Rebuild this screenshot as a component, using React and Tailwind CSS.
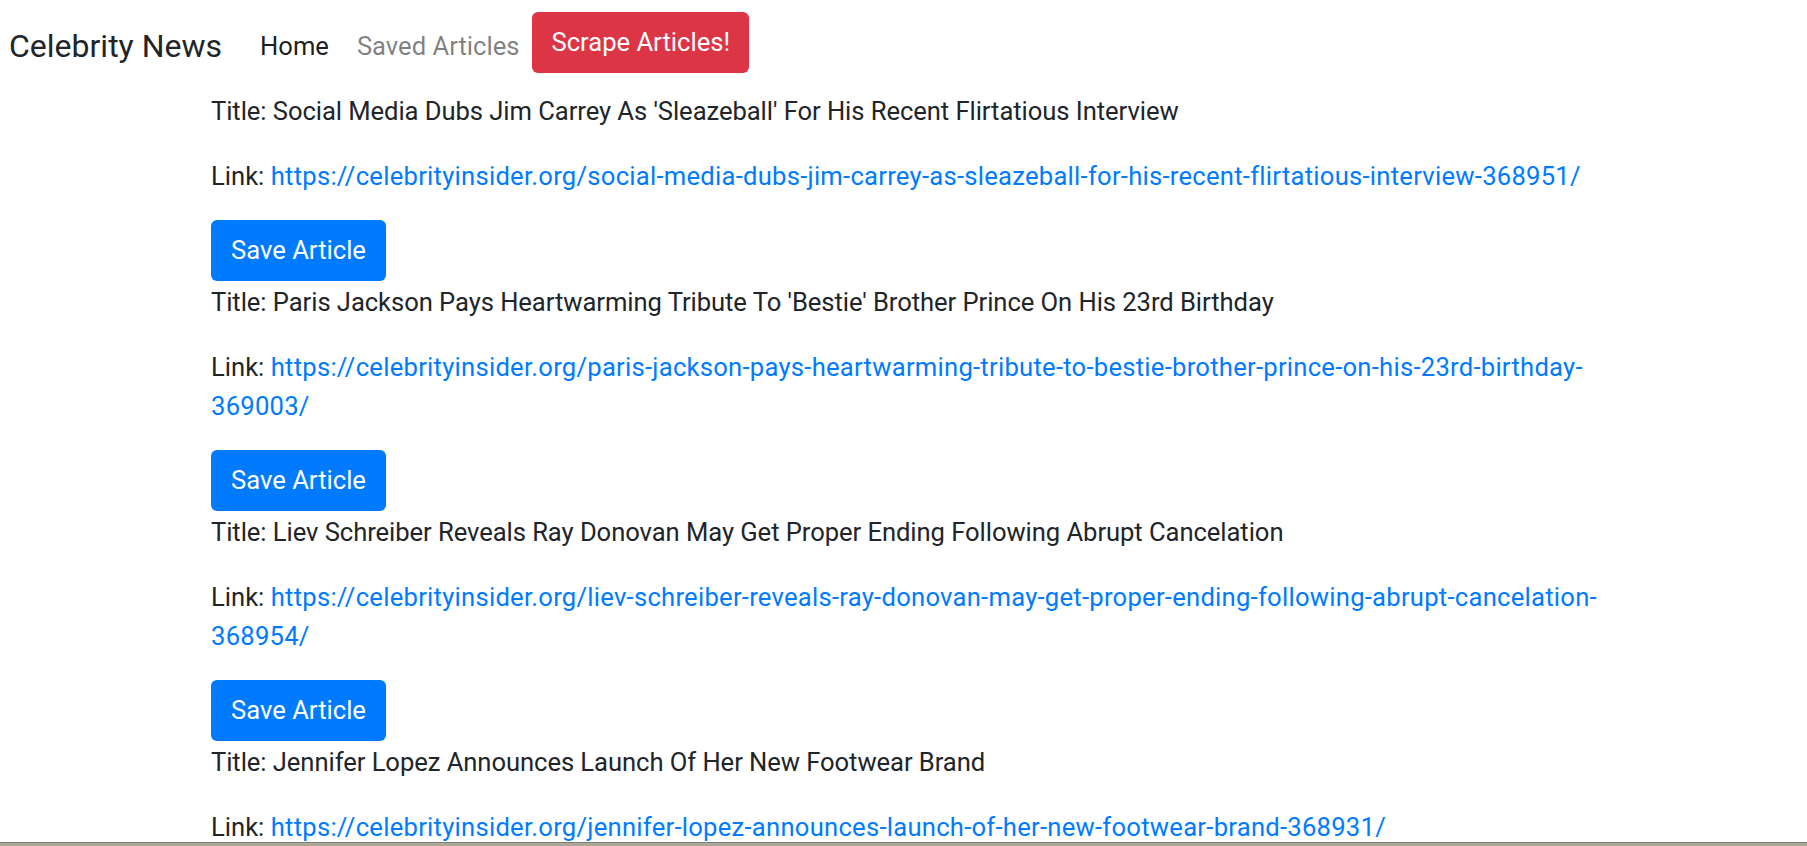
const articles = [
    {
        title: "Social Media Dubs Jim Carrey As 'Sleazeball' For His Recent Flirtatious Interview",
        link: "https://celebrityinsider.org/social-media-dubs-jim-carrey-as-sleazeball-for-his-recent-flirtatious-interview-368951/",
    },
    {
        title: "Paris Jackson Pays Heartwarming Tribute To 'Bestie' Brother Prince On His 23rd Birthday",
        link: "https://celebrityinsider.org/paris-jackson-pays-heartwarming-tribute-to-bestie-brother-prince-on-his-23rd-birthday-369003/",
    },
    {
        title: "Liev Schreiber Reveals Ray Donovan May Get Proper Ending Following Abrupt Cancelation",
        link: "https://celebrityinsider.org/liev-schreiber-reveals-ray-donovan-may-get-proper-ending-following-abrupt-cancelation-368954/",
    },
    {
        title: "Jennifer Lopez Announces Launch Of Her New Footwear Brand",
        link: "https://celebrityinsider.org/jennifer-lopez-announces-launch-of-her-new-footwear-brand-368931/",
    },
];

export default function App() {
    return (
        <div className="min-h-screen bg-white text-[#212529] font-['Roboto',sans-serif]">
            {/* Navbar */}
            <nav className="flex items-center pl-[9px] pt-[12px] pb-[13px]">
                <a className="text-[32px] leading-[48px] mt-[6px] text-[#212529] mr-[38px]">Celebrity News</a>
                <a className="text-[25.6px] leading-[38px] mt-[6px] text-[rgba(0,0,0,0.9)]">Home</a>
                <a className="text-[25.6px] leading-[38px] mt-[6px] text-[rgba(0,0,0,0.5)] ml-[28px] mr-[13px]">Saved Articles</a>
                <button className="h-[61px] px-[19px] rounded-[6px] bg-[#dc3545] text-white text-[25.6px]">Scrape Articles!</button>
            </nav>

            {/* Articles */}
            <div className="pl-[211px] pr-[150px] pt-[6px]">
                {articles.map((a) => (
                    <div key={a.link}>
                        <p className="text-[25.6px] leading-[39px] tracking-[-0.06px] mb-[26px]">Title: {a.title}</p>
                        <p className="text-[25.6px] leading-[39px] mb-[24px]">
                            Link: <a href={a.link} className="text-[#007bff] tracking-[0.26px]">{a.link}</a>
                        </p>
                        <button className="h-[61px] w-[175px] mb-[2px] rounded-[6px] bg-[#007bff] text-white text-[25.6px]">Save Article</button>
                    </div>
                ))}
            </div>

            {/* window edge */}
            <div className="fixed bottom-0 left-0 right-0 h-[4px] bg-[#aca899] border-t border-[#7f7f7f]" />
        </div>
    );
}
